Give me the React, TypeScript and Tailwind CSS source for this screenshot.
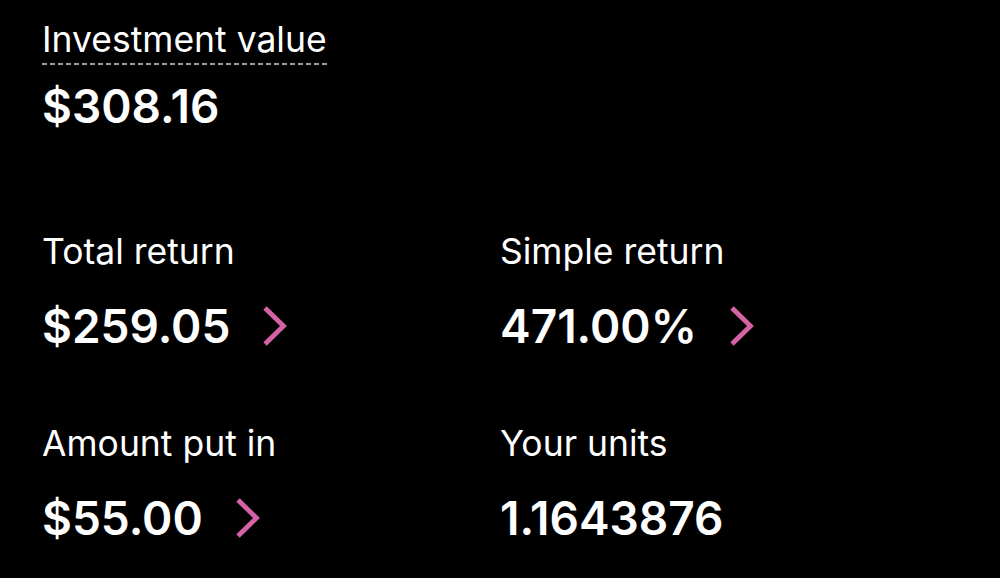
import React from "react";

const Chevron = () => (
  <svg width="26" height="42" viewBox="0 0 26 42" fill="none" className="shrink-0">
    <path d="M3 3 L21.5 21 L3 39" stroke="#d562a6" strokeWidth="4.8" strokeLinecap="butt" strokeLinejoin="miter" />
  </svg>
);

const Stat = ({ label, value, chevron }: { label: string; value: string; chevron?: boolean }) => (
  <div className="flex flex-col">
    <div className="text-[35.5px] leading-[40px] text-white">{label}</div>
    <div className="mt-[29px] flex items-center gap-[32px]">
      <span className="text-[46px] leading-[50px] font-semibold text-white">{value}</span>
      {chevron && <Chevron />}
    </div>
  </div>
);

export default function App() {
  return (
    <div
      className="w-[1000px] h-[578px] bg-black text-white overflow-hidden pl-[42px] pt-[20px]"
      style={{ fontFamily: "Inter, 'Noto Sans', sans-serif" }}
    >
      <div className="inline-flex flex-col">
        <div className="text-[35.5px] leading-[40px] text-white">Investment value</div>
        <div className="mt-[3px] h-[2px] w-full bg-[repeating-linear-gradient(to_right,#9a9a9a_0_5px,transparent_5px_8px)]" />
      </div>
      <div className="mt-[16px] text-[46px] leading-[50px] font-semibold">$308.16</div>
      <div className="mt-[101px] grid grid-cols-[458px_1fr] gap-y-[73px]">
        <Stat label="Total return" value="$259.05" chevron />
        <Stat label="Simple return" value="471.00%" chevron />
        <Stat label="Amount put in" value="$55.00" chevron />
        <Stat label="Your units" value="1.1643876" />
      </div>
    </div>
  );
}
